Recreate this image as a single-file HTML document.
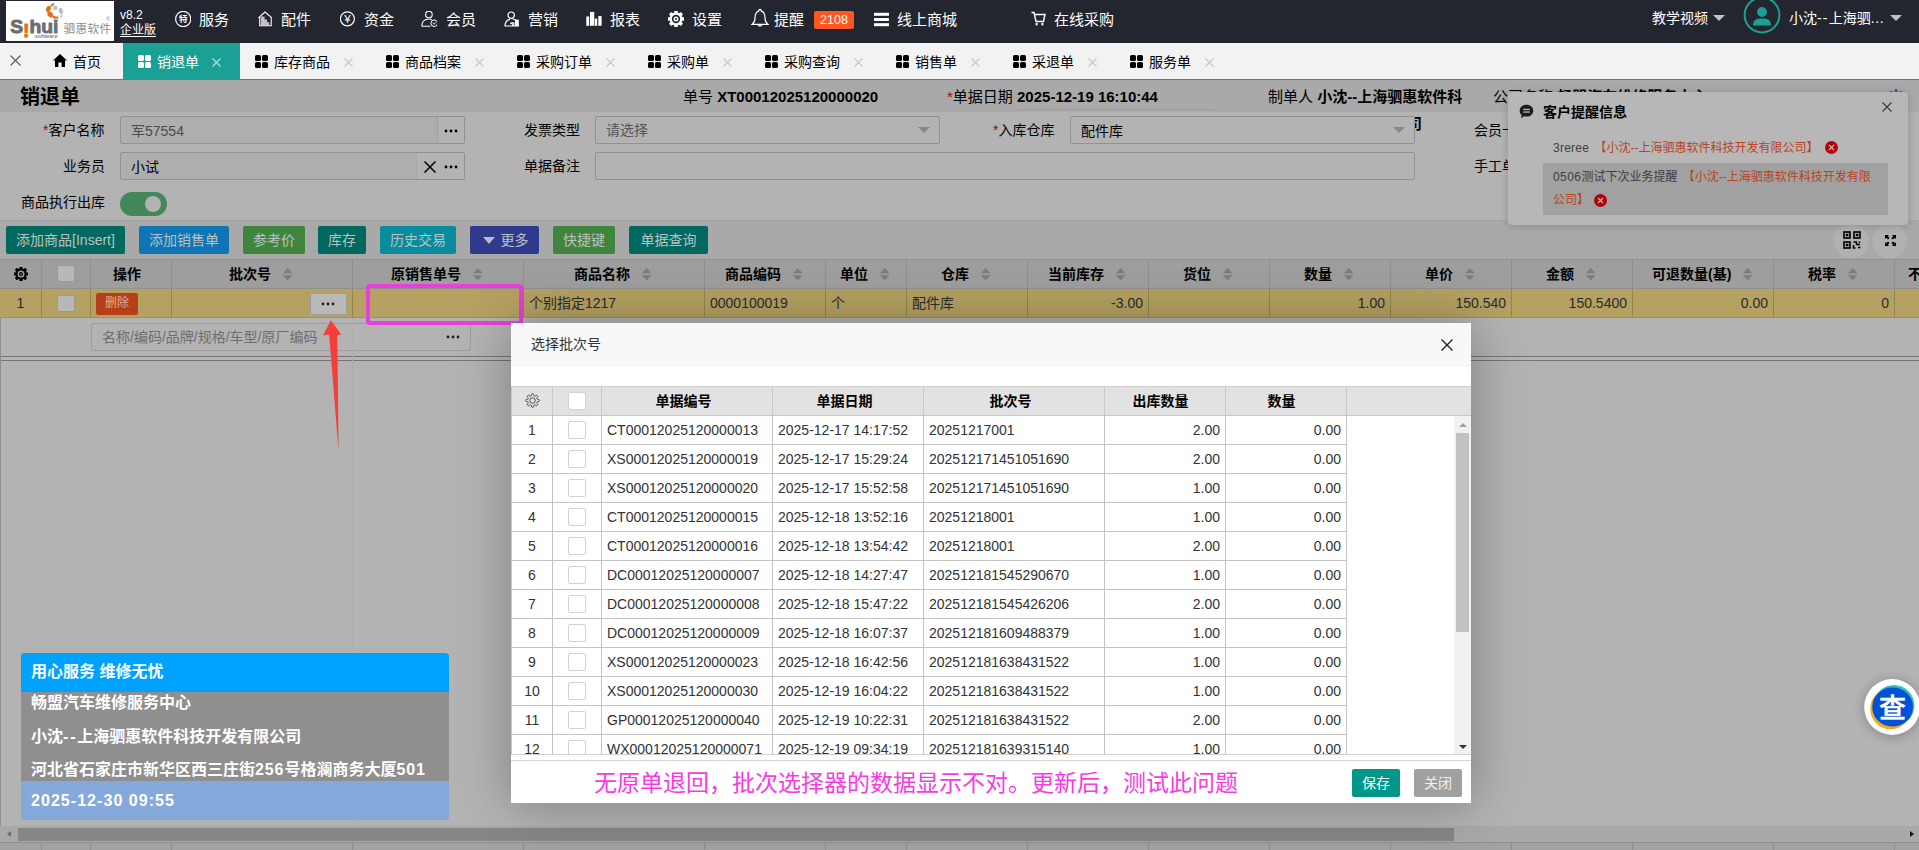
<!DOCTYPE html><html lang="zh-CN"><head><meta charset="utf-8"><title>销退单</title><style>
*{box-sizing:border-box;margin:0;padding:0}
html,body{width:1919px;height:850px;overflow:hidden;background:#b3b3b3}
body{font-family:"Liberation Sans","Noto Sans CJK SC",sans-serif;font-size:14px;color:#000;position:relative}
.abs{position:absolute}
.t{position:absolute;white-space:nowrap;line-height:20px;height:20px}
.b{font-weight:bold}
#top{position:absolute;left:0;top:0;width:1919px;height:43px;background:#23262e}
#top .t{color:#fff;font-size:15px}
#tabs{position:absolute;left:0;top:43px;width:1919px;height:37px;background:#f2f2f2;border-bottom:1px solid #16a092}
#tabs .t{font-size:14px;color:#000}
.ticon{position:absolute;width:13px;height:13px}
.tx{position:absolute;width:10px;height:10px}
.inp{position:absolute;height:28px;border:1px solid #929292;border-radius:2px;background:#b3b3b3}
.btn{position:absolute;top:226px;height:28px;line-height:28px;color:#b9c3c2;font-size:14px;text-align:center;border-radius:2px;white-space:nowrap}
.th{position:absolute;top:260px;height:28px;border-right:1px solid #8f8f8f;}
.td{position:absolute;top:289px;height:28px;border-right:1px solid #94834f;line-height:28px;font-size:14px;color:#2b2b2b;white-space:nowrap}
.sort{position:absolute;top:268px;width:8px;height:13px}
.mth{position:absolute;top:387px;height:29px;border-right:1px solid #c8c8c8;line-height:28px;text-align:center;font-weight:bold;font-size:14px;color:#000}
.mtd{position:absolute;height:29px;border-right:1px solid #c4c4c4;border-bottom:1px solid #c4c4c4;line-height:28px;font-size:14px;color:#333;white-space:nowrap;background:#fff}
.cb{position:absolute;width:17px;height:17px;border:1px solid #d2d2d2;border-radius:2px;background:#fff}
</style></head><body>
<div id="top">
<div class="abs" style="left:6px;top:1px;width:108px;height:40px;background:#fff"></div>
<svg class="abs" style="left:6px;top:1px" width="108" height="40" viewBox="0 0 108 40">
<g fill="#e2701f">
<ellipse cx="46.3" cy="3.8" rx="2.3" ry="1.1" transform="rotate(-38 46.3 3.8)"/>
<ellipse cx="42.4" cy="7.9" rx="2.3" ry="3.3" transform="rotate(28 42.4 7.9)"/>
<ellipse cx="44.2" cy="13.4" rx="2.5" ry="3.3" transform="rotate(-38 44.2 13.4)"/>
<ellipse cx="48.5" cy="16.2" rx="2.1" ry="1.4" transform="rotate(22 48.5 16.2)"/>
<circle cx="51.2" cy="16.5" r="1.2"/>
</g>
<circle cx="49.2" cy="6.9" r="2.3" fill="#c2c2c2"/>
<ellipse cx="54.8" cy="9.9" rx="2" ry="3.1" transform="rotate(-18 54.8 9.9)" fill="#bcbcbc"/>
<ellipse cx="55.2" cy="15.2" rx="1.2" ry="2" transform="rotate(24 55.2 15.2)" fill="#cfcfcf"/>
<circle cx="52.6" cy="18.2" r=".9" fill="#dedede"/>
<text x="4.2" y="31.6" font-family="Liberation Sans,sans-serif" font-weight="bold" font-size="18.8" fill="#6e6e6e" stroke="#6e6e6e" stroke-width=".9" stroke-linejoin="round" textLength="48.2" lengthAdjust="spacingAndGlyphs">S<tspan fill="#e2701f" stroke="#e2701f" dy="4.2">!</tspan><tspan dy="-4.2">hui</tspan></text>
<text x="28.4" y="36.7" font-family="Liberation Sans,sans-serif" font-weight="bold" font-size="5.2" fill="#858585" textLength="23.3" lengthAdjust="spacingAndGlyphs">software</text>
<text x="57.6" y="31.6" font-family="Liberation Sans,Noto Sans CJK SC,sans-serif" font-size="11.6" fill="#8b8b8b" textLength="47.6">驷惠软件</text>
<text x="100" y="20" font-family="Liberation Sans,sans-serif" font-size="5.5" fill="#999">®</text>
</svg>
<div class="t" style="left:120px;top:7px;font-size:12px;line-height:16px">v8.2</div>
<div class="t" style="left:120px;top:22px;font-size:12px;line-height:16px;text-decoration:underline;text-decoration-thickness:1px;text-underline-offset:1.5px">企业版</div>
<svg class="abs" style="left:175px;top:11px" width="16" height="16" viewBox="0 0 16 16"><circle cx="8.2" cy="8" r="7.6" fill="none" stroke="#fff" stroke-width="1.2"/><text x="8.2" y="11" text-anchor="middle" font-size="8.5" fill="#fff" font-family="Liberation Sans,Noto Sans CJK SC,sans-serif" font-weight="bold">特</text></svg>
<div class="t" style="left:199px;top:10px">服务</div>
<svg class="abs" style="left:257px;top:11px" width="16" height="16" viewBox="0 0 16 16"><path d="M1.4 6.9 L8 1 L14.9 6.9 M2.7 6 V14.7 H14.2 V6" fill="none" stroke="#fff" stroke-width="1.1"/><path d="M3.9 14.2 V5.6 H7.6 V8.4 H10.1 V11.3 H12.2 V14.2 Z" fill="#fff" opacity=".72"/></svg>
<div class="t" style="left:281px;top:10px">配件</div>
<svg class="abs" style="left:340px;top:11px" width="16" height="16" viewBox="0 0 16 16"><circle cx="7.4" cy="7.8" r="7" fill="none" stroke="#fff" stroke-width="1.2"/><text x="7.4" y="11.8" text-anchor="middle" font-size="11.5" fill="#fff" font-family="Liberation Sans,Noto Sans CJK SC,sans-serif">¥</text></svg>
<div class="t" style="left:364px;top:10px">资金</div>
<svg class="abs" style="left:421px;top:11px" width="16" height="16" viewBox="0 0 16 16"><circle cx="7.9" cy="3.5" r="3.3" fill="none" stroke="#fff" stroke-width="1.1"/><path d="M0.8 15.2 C0.8 10.5 3.5 8 7.9 8 C9 8 10 8.2 10.8 8.6 M0.8 15.2 H9.4" fill="none" stroke="#fff" stroke-width="1.1"/><circle cx="13.2" cy="12.2" r="3.3" fill="none" stroke="#fff" stroke-width="1"/><path d="M11.8 11.6 L13 13.3 L14.6 11.2" stroke="#fff" stroke-width=".8" fill="none"/></svg>
<div class="t" style="left:446px;top:10px">会员</div>
<svg class="abs" style="left:504px;top:11px" width="16" height="16" viewBox="0 0 16 16"><circle cx="7.2" cy="4.2" r="3.2" fill="none" stroke="#fff" stroke-width="1.2"/><path d="M0.8 15 C1.2 11 3.5 8.8 6 8.3 M0.6 15 H15 M8.6 8 C10 8.2 11 8.6 11.6 9.2" fill="none" stroke="#fff" stroke-width="1.2"/><rect x="8" y="11.2" width="2.4" height="3.8" fill="#fff" opacity=".85"/><rect x="11" y="8.6" width="3.8" height="6.4" fill="#fff"/><circle cx="7.2" cy="12.2" r="1" fill="#fff"/></svg>
<div class="t" style="left:528px;top:10px">营销</div>
<svg class="abs" style="left:586px;top:11px" width="16" height="16" viewBox="0 0 16 16"><rect x="0.3" y="5.5" width="2.9" height="9.3" fill="#fff"/><rect x="4" y="0.9" width="4.2" height="13.9" fill="#fff"/><rect x="8.7" y="7.6" width="2.5" height="7.2" fill="#fff"/><rect x="12.3" y="5.1" width="3.3" height="9.7" fill="#fff"/></svg>
<div class="t" style="left:610px;top:10px">报表</div>
<svg class="abs" style="left:668px;top:11px" width="16" height="16" viewBox="0 0 16 16"><rect x="6.2" y="-0.4" width="3.6" height="5" rx="1" fill="#fff" transform="rotate(0 8 8)"/><rect x="6.2" y="-0.4" width="3.6" height="5" rx="1" fill="#fff" transform="rotate(45 8 8)"/><rect x="6.2" y="-0.4" width="3.6" height="5" rx="1" fill="#fff" transform="rotate(90 8 8)"/><rect x="6.2" y="-0.4" width="3.6" height="5" rx="1" fill="#fff" transform="rotate(135 8 8)"/><rect x="6.2" y="-0.4" width="3.6" height="5" rx="1" fill="#fff" transform="rotate(180 8 8)"/><rect x="6.2" y="-0.4" width="3.6" height="5" rx="1" fill="#fff" transform="rotate(225 8 8)"/><rect x="6.2" y="-0.4" width="3.6" height="5" rx="1" fill="#fff" transform="rotate(270 8 8)"/><rect x="6.2" y="-0.4" width="3.6" height="5" rx="1" fill="#fff" transform="rotate(315 8 8)"/><circle cx="8" cy="8" r="6.5" fill="#fff"/><circle cx="8" cy="8" r="4.2" fill="#23262e"/><circle cx="8" cy="8" r="2.5" fill="#fff"/><circle cx="8" cy="8" r="1" fill="#23262e"/></svg>
<div class="t" style="left:692px;top:10px">设置</div>
<svg class="abs" style="left:751px;top:8px" width="18" height="20" viewBox="0 0 18 18" preserveAspectRatio="none"><path d="M9 1.2 C9.8 1.2 10.2 1.8 10.1 2.5 C13 3.3 14 6 14 9 C14 12 15 13.5 17 14.8 H1 C3 13.5 4 12 4 9 C4 6 5 3.3 7.9 2.5 C7.8 1.8 8.2 1.2 9 1.2 Z M7.3 15.2 C7.6 16.6 10.4 16.6 10.7 15.2" fill="none" stroke="#fff" stroke-width="1.2"/></svg>
<div class="t" style="left:774px;top:10px">提醒</div>
<div class="abs" style="left:814px;top:11px;width:40px;height:18px;background:#ff5722;border-radius:2px;color:#fff;font-size:12.5px;line-height:19px;text-align:center">2108</div>
<svg class="abs" style="left:874px;top:12px" width="15" height="15" viewBox="0 0 15 15"><rect x="0" y="0.8" width="15" height="3" fill="#fff"/><rect x="0" y="6" width="15" height="3" fill="#fff"/><rect x="0" y="11.2" width="15" height="3" fill="#fff"/></svg>
<div class="t" style="left:897px;top:10px">线上商城</div>
<svg class="abs" style="left:1031px;top:11px" width="16" height="16" viewBox="0 0 16 16"><path d="M0.5 1.5 H3 L5 10.5 H12.5 L14 3.5 H3.6" fill="none" stroke="#fff" stroke-width="1.4"/><rect x="4.6" y="12" width="2" height="2.4" fill="#fff"/><rect x="10.4" y="12" width="2" height="2.4" fill="#fff"/></svg>
<div class="t" style="left:1054px;top:10px">在线采购</div>
<div class="t" style="left:1652px;top:8px;font-size:14px">教学视频</div>
<div class="abs" style="left:1713px;top:15px;width:0;height:0;border:6px solid transparent;border-top-color:#c2c2c2;border-bottom:0"></div>
<svg class="abs" style="left:1742.9px;top:-4.2px" width="38" height="38" viewBox="0 0 38 38"><circle cx="19" cy="19" r="17.4" fill="#23262e" stroke="#1aa094" stroke-width="2"/><circle cx="19" cy="16" r="4.9" fill="#1aa094"/><path d="M10 29.5 C10 24.4 13 22.6 19 22.6 C25 22.6 28 24.4 28 29.5 Z" fill="#1aa094"/></svg>
<div class="t" style="left:1789px;top:8px;font-size:14px">小沈<span style="letter-spacing:1.2px">--</span>上海驷<span style="letter-spacing:.6px">...</span></div>
<div class="abs" style="left:1890px;top:15px;width:0;height:0;border:6px solid transparent;border-top-color:#c2c2c2;border-bottom:0"></div>
</div>
<div id="tabs">
<svg class="abs" style="left:10px;top:12px" width="11" height="11" viewBox="0 0 11 11"><path d="M0.5 0.5 L10.5 10.5 M10.5 0.5 L0.5 10.5" stroke="#5a5a5a" stroke-width="1.1" fill="none"/></svg>
<svg class="abs" style="left:53px;top:11px" width="14" height="13" viewBox="0 0 14 13"><path d="M7 0 L14 6.6 H12 V13 H8.6 V8.4 H5.4 V13 H2 V6.6 H0 Z" fill="#000"/></svg>
<div class="t" style="left:73px;top:9px">首页</div>
<div class="abs" style="left:123px;top:0;width:117px;height:37px;background:#1aa094"></div>
<svg class="abs" style="left:138px;top:12px" width="13" height="13" viewBox="0 0 13 13"><rect x="0" y="0" width="6" height="6" rx="1.6" fill="#fff"/><rect x="7" y="0" width="6" height="6" rx="1.6" fill="#fff"/><rect x="0" y="7" width="6" height="6" rx="1.6" fill="#fff"/><rect x="7" y="7" width="6" height="6" rx="1.6" fill="#fff"/></svg>
<div class="t" style="left:157px;top:9px;color:#fff">销退单</div>
<svg class="abs" style="left:212px;top:15px" width="9" height="9" viewBox="0 0 9 9"><path d="M0.5 0.5 L8.5 8.5 M8.5 0.5 L0.5 8.5" stroke="#b7e0db" stroke-width="1.1" fill="none"/></svg>
<svg class="abs" style="left:255px;top:12px" width="13" height="13" viewBox="0 0 13 13"><rect x="0" y="0" width="6" height="6" rx="1.6" fill="#000"/><rect x="7" y="0" width="6" height="6" rx="1.6" fill="#000"/><rect x="0" y="7" width="6" height="6" rx="1.6" fill="#000"/><rect x="7" y="7" width="6" height="6" rx="1.6" fill="#000"/></svg>
<div class="t" style="left:274px;top:9px">库存商品</div>
<svg class="abs" style="left:344px;top:15px" width="9" height="9" viewBox="0 0 9 9"><path d="M0.5 0.5 L8.5 8.5 M8.5 0.5 L0.5 8.5" stroke="#c4c8cc" stroke-width="1.1" fill="none"/></svg>
<svg class="abs" style="left:386px;top:12px" width="13" height="13" viewBox="0 0 13 13"><rect x="0" y="0" width="6" height="6" rx="1.6" fill="#000"/><rect x="7" y="0" width="6" height="6" rx="1.6" fill="#000"/><rect x="0" y="7" width="6" height="6" rx="1.6" fill="#000"/><rect x="7" y="7" width="6" height="6" rx="1.6" fill="#000"/></svg>
<div class="t" style="left:405px;top:9px">商品档案</div>
<svg class="abs" style="left:475px;top:15px" width="9" height="9" viewBox="0 0 9 9"><path d="M0.5 0.5 L8.5 8.5 M8.5 0.5 L0.5 8.5" stroke="#c4c8cc" stroke-width="1.1" fill="none"/></svg>
<svg class="abs" style="left:517px;top:12px" width="13" height="13" viewBox="0 0 13 13"><rect x="0" y="0" width="6" height="6" rx="1.6" fill="#000"/><rect x="7" y="0" width="6" height="6" rx="1.6" fill="#000"/><rect x="0" y="7" width="6" height="6" rx="1.6" fill="#000"/><rect x="7" y="7" width="6" height="6" rx="1.6" fill="#000"/></svg>
<div class="t" style="left:536px;top:9px">采购订单</div>
<svg class="abs" style="left:606px;top:15px" width="9" height="9" viewBox="0 0 9 9"><path d="M0.5 0.5 L8.5 8.5 M8.5 0.5 L0.5 8.5" stroke="#c4c8cc" stroke-width="1.1" fill="none"/></svg>
<svg class="abs" style="left:648px;top:12px" width="13" height="13" viewBox="0 0 13 13"><rect x="0" y="0" width="6" height="6" rx="1.6" fill="#000"/><rect x="7" y="0" width="6" height="6" rx="1.6" fill="#000"/><rect x="0" y="7" width="6" height="6" rx="1.6" fill="#000"/><rect x="7" y="7" width="6" height="6" rx="1.6" fill="#000"/></svg>
<div class="t" style="left:667px;top:9px">采购单</div>
<svg class="abs" style="left:723px;top:15px" width="9" height="9" viewBox="0 0 9 9"><path d="M0.5 0.5 L8.5 8.5 M8.5 0.5 L0.5 8.5" stroke="#c4c8cc" stroke-width="1.1" fill="none"/></svg>
<svg class="abs" style="left:765px;top:12px" width="13" height="13" viewBox="0 0 13 13"><rect x="0" y="0" width="6" height="6" rx="1.6" fill="#000"/><rect x="7" y="0" width="6" height="6" rx="1.6" fill="#000"/><rect x="0" y="7" width="6" height="6" rx="1.6" fill="#000"/><rect x="7" y="7" width="6" height="6" rx="1.6" fill="#000"/></svg>
<div class="t" style="left:784px;top:9px">采购查询</div>
<svg class="abs" style="left:854px;top:15px" width="9" height="9" viewBox="0 0 9 9"><path d="M0.5 0.5 L8.5 8.5 M8.5 0.5 L0.5 8.5" stroke="#c4c8cc" stroke-width="1.1" fill="none"/></svg>
<svg class="abs" style="left:896px;top:12px" width="13" height="13" viewBox="0 0 13 13"><rect x="0" y="0" width="6" height="6" rx="1.6" fill="#000"/><rect x="7" y="0" width="6" height="6" rx="1.6" fill="#000"/><rect x="0" y="7" width="6" height="6" rx="1.6" fill="#000"/><rect x="7" y="7" width="6" height="6" rx="1.6" fill="#000"/></svg>
<div class="t" style="left:915px;top:9px">销售单</div>
<svg class="abs" style="left:971px;top:15px" width="9" height="9" viewBox="0 0 9 9"><path d="M0.5 0.5 L8.5 8.5 M8.5 0.5 L0.5 8.5" stroke="#c4c8cc" stroke-width="1.1" fill="none"/></svg>
<svg class="abs" style="left:1013px;top:12px" width="13" height="13" viewBox="0 0 13 13"><rect x="0" y="0" width="6" height="6" rx="1.6" fill="#000"/><rect x="7" y="0" width="6" height="6" rx="1.6" fill="#000"/><rect x="0" y="7" width="6" height="6" rx="1.6" fill="#000"/><rect x="7" y="7" width="6" height="6" rx="1.6" fill="#000"/></svg>
<div class="t" style="left:1032px;top:9px">采退单</div>
<svg class="abs" style="left:1088px;top:15px" width="9" height="9" viewBox="0 0 9 9"><path d="M0.5 0.5 L8.5 8.5 M8.5 0.5 L0.5 8.5" stroke="#c4c8cc" stroke-width="1.1" fill="none"/></svg>
<svg class="abs" style="left:1130px;top:12px" width="13" height="13" viewBox="0 0 13 13"><rect x="0" y="0" width="6" height="6" rx="1.6" fill="#000"/><rect x="7" y="0" width="6" height="6" rx="1.6" fill="#000"/><rect x="0" y="7" width="6" height="6" rx="1.6" fill="#000"/><rect x="7" y="7" width="6" height="6" rx="1.6" fill="#000"/></svg>
<div class="t" style="left:1149px;top:9px">服务单</div>
<svg class="abs" style="left:1205px;top:15px" width="9" height="9" viewBox="0 0 9 9"><path d="M0.5 0.5 L8.5 8.5 M8.5 0.5 L0.5 8.5" stroke="#c4c8cc" stroke-width="1.1" fill="none"/></svg>
</div>
<div class="abs" style="left:0;top:80px;width:1919px;height:32px;background:#a9a9a9"></div>
<div class="abs" style="left:0;top:220px;width:1919px;height:39px;background:#a9a9a9;border-top:1px solid #a3a3a3"></div>
<div class="t b" style="left:20px;top:84px;font-size:20px;line-height:26px;height:26px">销退单</div>
<div class="t" style="left:683px;top:87px;font-size:15px">单号 <span class="b" style="font-size:15px">XT00012025120000020</span></div>
<div class="t" style="left:947px;top:87px;font-size:15px"><span style="color:#b10000">*</span>单据日期 <span class="b" style="font-size:15px">2025-12-19 16:10:44</span></div>
<div class="abs" style="left:1017px;top:109px;width:198px;height:1px;background:#9b9b9b"></div>
<div class="t" style="left:1268px;top:87px;font-size:15px">制单人 <span class="b">小沈--上海驷惠软件科</span></div>
<div class="t b" style="left:1407px;top:114px;font-size:15px">司</div>
<div class="t" style="left:1493px;top:87px;font-size:15px">公司名称 <span class="b">畅盟汽车维修服务中心</span></div>
<div class="t" style="left:43px;top:120px"><span style="color:#b10000">*</span>客户名称</div>
<div class="inp" style="left:120px;top:116px;width:345px;background:#aeaeae"><div class="abs" style="left:316px;top:0;width:27px;height:26px;background:#b3b3b3;border-left:1px solid #a0a0a0"></div></div>
<div class="t" style="left:131px;top:121px;color:#4c4c4c">军57554</div>
<svg class="abs" style="left:444px;top:129px" width="14" height="4" viewBox="0 0 14 4"><circle cx="2" cy="2" r="1.4" fill="#000"/><circle cx="7" cy="2" r="1.4" fill="#000"/><circle cx="12" cy="2" r="1.4" fill="#000"/></svg>
<div class="t" style="left:524px;top:120px">发票类型</div>
<div class="inp" style="left:595px;top:116px;width:345px"></div>
<div class="t" style="left:606px;top:120px;color:#555">请选择</div>
<div class="abs" style="left:918px;top:127px;width:0;height:0;border:6px solid transparent;border-top-color:#888;border-bottom:0"></div>
<div class="t" style="left:993px;top:120px"><span style="color:#b10000">*</span>入库仓库</div>
<div class="inp" style="left:1070px;top:116px;width:345px"></div>
<div class="t" style="left:1081px;top:121px;">配件库</div>
<div class="abs" style="left:1393px;top:127px;width:0;height:0;border:6px solid transparent;border-top-color:#888;border-bottom:0"></div>
<div class="t" style="left:1474px;top:120px">会员卡号</div>
<div class="t" style="left:63px;top:156px">业务员</div>
<div class="inp" style="left:120px;top:152px;width:345px;background:#aeaeae"><div class="abs" style="left:295px;top:0;width:48px;height:26px;background:#b3b3b3;border-left:1px solid #a8a8a8"></div></div>
<div class="t" style="left:131px;top:157px;">小试</div>
<svg class="abs" style="left:424px;top:161px" width="12" height="12" viewBox="0 0 12 12"><path d="M0.5 0.5 L11.5 11.5 M11.5 0.5 L0.5 11.5" stroke="#000" stroke-width="1.5" fill="none"/></svg>
<svg class="abs" style="left:444px;top:165px" width="14" height="4" viewBox="0 0 14 4"><circle cx="2" cy="2" r="1.4" fill="#000"/><circle cx="7" cy="2" r="1.4" fill="#000"/><circle cx="12" cy="2" r="1.4" fill="#000"/></svg>
<div class="t" style="left:524px;top:156px">单据备注</div>
<div class="inp" style="left:595px;top:152px;width:820px"></div>
<div class="t" style="left:1474px;top:156px">手工单号</div>
<div class="t" style="left:21px;top:192px">商品执行出库</div>
<div class="abs" style="left:120px;top:192px;width:47px;height:24px;border-radius:12px;background:#43865a"></div>
<div class="abs" style="left:145px;top:196px;width:16px;height:16px;border-radius:8px;background:#b3b3b3"></div>
<div class="btn" style="left:6px;width:119px;background:#00695f">添加商品[Insert]</div>
<div class="btn" style="left:139px;width:90px;background:#0f75b4">添加销售单</div>
<div class="btn" style="left:243px;width:62px;background:#3f853e">参考价</div>
<div class="btn" style="left:318px;width:48px;background:#00695f">库存</div>
<div class="btn" style="left:380px;width:76px;background:#088c9e">历史交易</div>
<div class="btn" style="left:470px;width:69px;background:#2f3a8c;padding-left:20px">更多<span class="abs" style="left:13px;top:11px;width:0;height:0;border:6px solid transparent;border-top:7px solid #b9bbd0;border-bottom:0"></span></div>
<div class="btn" style="left:553px;width:62px;background:#3f853e">快捷键</div>
<div class="btn" style="left:629px;width:79px;background:#00695f">单据查询</div>
<div class="abs" style="left:1834px;top:224px;width:35px;height:34px;border-radius:17px;background:#b1b1b1"></div>
<div class="abs" style="left:1872px;top:224px;width:35px;height:34px;border-radius:17px;background:#b1b1b1"></div>
<svg class="abs" style="left:1843px;top:231px" width="18" height="18" viewBox="0 0 18 18" fill="none" stroke="#000" stroke-width="1.6"><rect x="1" y="1" width="6" height="6"/><rect x="11" y="1" width="6" height="6"/><rect x="1" y="11" width="6" height="6"/><path d="M2.8 4 h2.6 M12.8 4 h2.6 M2.8 14 h2.6" stroke-width="2.6"/><path d="M10.5 11 h3 v2.5 h3.5 M10.5 14 v3 h2 M15 16.5 h2.5 M16.5 10.5 v1.5" stroke-width="1.5"/></svg>
<svg class="abs" style="left:1885px;top:235px" width="11" height="11" viewBox="0 0 11 11" fill="#000"><path d="M0 0 H4 L2.8 1.2 L4.6 3 L3 4.6 L1.2 2.8 L0 4 Z"/><path d="M11 0 V4 L9.8 2.8 L8 4.6 L6.4 3 L8.2 1.2 L7 0 Z"/><path d="M0 11 V7 L1.2 8.2 L3 6.4 L4.6 8 L2.8 9.8 L4 11 Z"/><path d="M11 11 H7 L8.2 9.8 L6.4 8 L8 6.4 L9.8 8.2 L11 7 Z"/></svg>
<div class="abs" style="left:0;top:259px;width:1919px;height:30px;background:#9e9e9e;border-top:1px solid #8f8f8f;border-bottom:1px solid #8f8f8f"></div>
<div class="th" style="left:1px;width:41px"></div>
<div class="th" style="left:42px;width:49px"></div>
<div class="th" style="left:91px;width:81px"></div>
<div class="th" style="left:172px;width:181px"></div>
<div class="th" style="left:353px;width:171px"></div>
<div class="th" style="left:524px;width:181px"></div>
<div class="th" style="left:705px;width:121px"></div>
<div class="th" style="left:826px;width:81px"></div>
<div class="th" style="left:907px;width:121px"></div>
<div class="th" style="left:1028px;width:121px"></div>
<div class="th" style="left:1149px;width:121px"></div>
<div class="th" style="left:1270px;width:121px"></div>
<div class="th" style="left:1391px;width:121px"></div>
<div class="th" style="left:1512px;width:121px"></div>
<div class="th" style="left:1633px;width:141px"></div>
<div class="th" style="left:1774px;width:121px"></div>
<div class="th" style="left:1895px;width:66px"></div>
<div class="t b" style="left:113px;top:264px">操作</div>
<div class="t b" style="left:229px;top:264px">批次号</div>
<svg class="abs" style="left:282.8px;top:268px" width="9.4" height="12.4" viewBox="0 0 9 13" preserveAspectRatio="none"><path d="M4.5 0 L9 5.4 H0 Z" fill="#7d7d7d"/><path d="M4.5 13 L9 7.6 H0 Z" fill="#7d7d7d"/></svg>
<div class="t b" style="left:391px;top:264px">原销售单号</div>
<svg class="abs" style="left:472.8px;top:268px" width="9.4" height="12.4" viewBox="0 0 9 13" preserveAspectRatio="none"><path d="M4.5 0 L9 5.4 H0 Z" fill="#7d7d7d"/><path d="M4.5 13 L9 7.6 H0 Z" fill="#7d7d7d"/></svg>
<div class="t b" style="left:574px;top:264px">商品名称</div>
<svg class="abs" style="left:641.8px;top:268px" width="9.4" height="12.4" viewBox="0 0 9 13" preserveAspectRatio="none"><path d="M4.5 0 L9 5.4 H0 Z" fill="#7d7d7d"/><path d="M4.5 13 L9 7.6 H0 Z" fill="#7d7d7d"/></svg>
<div class="t b" style="left:725px;top:264px">商品编码</div>
<svg class="abs" style="left:792.8px;top:268px" width="9.4" height="12.4" viewBox="0 0 9 13" preserveAspectRatio="none"><path d="M4.5 0 L9 5.4 H0 Z" fill="#7d7d7d"/><path d="M4.5 13 L9 7.6 H0 Z" fill="#7d7d7d"/></svg>
<div class="t b" style="left:840px;top:264px">单位</div>
<svg class="abs" style="left:879.8px;top:268px" width="9.4" height="12.4" viewBox="0 0 9 13" preserveAspectRatio="none"><path d="M4.5 0 L9 5.4 H0 Z" fill="#7d7d7d"/><path d="M4.5 13 L9 7.6 H0 Z" fill="#7d7d7d"/></svg>
<div class="t b" style="left:941px;top:264px">仓库</div>
<svg class="abs" style="left:980.8px;top:268px" width="9.4" height="12.4" viewBox="0 0 9 13" preserveAspectRatio="none"><path d="M4.5 0 L9 5.4 H0 Z" fill="#7d7d7d"/><path d="M4.5 13 L9 7.6 H0 Z" fill="#7d7d7d"/></svg>
<div class="t b" style="left:1048px;top:264px">当前库存</div>
<svg class="abs" style="left:1115.8px;top:268px" width="9.4" height="12.4" viewBox="0 0 9 13" preserveAspectRatio="none"><path d="M4.5 0 L9 5.4 H0 Z" fill="#7d7d7d"/><path d="M4.5 13 L9 7.6 H0 Z" fill="#7d7d7d"/></svg>
<div class="t b" style="left:1183px;top:264px">货位</div>
<svg class="abs" style="left:1222.8px;top:268px" width="9.4" height="12.4" viewBox="0 0 9 13" preserveAspectRatio="none"><path d="M4.5 0 L9 5.4 H0 Z" fill="#7d7d7d"/><path d="M4.5 13 L9 7.6 H0 Z" fill="#7d7d7d"/></svg>
<div class="t b" style="left:1304px;top:264px">数量</div>
<svg class="abs" style="left:1343.8px;top:268px" width="9.4" height="12.4" viewBox="0 0 9 13" preserveAspectRatio="none"><path d="M4.5 0 L9 5.4 H0 Z" fill="#7d7d7d"/><path d="M4.5 13 L9 7.6 H0 Z" fill="#7d7d7d"/></svg>
<div class="t b" style="left:1425px;top:264px">单价</div>
<svg class="abs" style="left:1464.8px;top:268px" width="9.4" height="12.4" viewBox="0 0 9 13" preserveAspectRatio="none"><path d="M4.5 0 L9 5.4 H0 Z" fill="#7d7d7d"/><path d="M4.5 13 L9 7.6 H0 Z" fill="#7d7d7d"/></svg>
<div class="t b" style="left:1546px;top:264px">金额</div>
<svg class="abs" style="left:1585.8px;top:268px" width="9.4" height="12.4" viewBox="0 0 9 13" preserveAspectRatio="none"><path d="M4.5 0 L9 5.4 H0 Z" fill="#7d7d7d"/><path d="M4.5 13 L9 7.6 H0 Z" fill="#7d7d7d"/></svg>
<div class="t b" style="left:1652px;top:264px">可退数量(基)</div>
<svg class="abs" style="left:1742.8px;top:268px" width="9.4" height="12.4" viewBox="0 0 9 13" preserveAspectRatio="none"><path d="M4.5 0 L9 5.4 H0 Z" fill="#7d7d7d"/><path d="M4.5 13 L9 7.6 H0 Z" fill="#7d7d7d"/></svg>
<div class="t b" style="left:1808px;top:264px">税率</div>
<svg class="abs" style="left:1847.8px;top:268px" width="9.4" height="12.4" viewBox="0 0 9 13" preserveAspectRatio="none"><path d="M4.5 0 L9 5.4 H0 Z" fill="#7d7d7d"/><path d="M4.5 13 L9 7.6 H0 Z" fill="#7d7d7d"/></svg>
<div class="t b" style="left:1908px;top:264px">不含税</div>
<svg class="abs" style="left:14px;top:267px" width="14" height="14" viewBox="0 0 16 16"><rect x="6.2" y="-0.4" width="3.6" height="5" rx="1" fill="#000" transform="rotate(0 8 8)"/><rect x="6.2" y="-0.4" width="3.6" height="5" rx="1" fill="#000" transform="rotate(45 8 8)"/><rect x="6.2" y="-0.4" width="3.6" height="5" rx="1" fill="#000" transform="rotate(90 8 8)"/><rect x="6.2" y="-0.4" width="3.6" height="5" rx="1" fill="#000" transform="rotate(135 8 8)"/><rect x="6.2" y="-0.4" width="3.6" height="5" rx="1" fill="#000" transform="rotate(180 8 8)"/><rect x="6.2" y="-0.4" width="3.6" height="5" rx="1" fill="#000" transform="rotate(225 8 8)"/><rect x="6.2" y="-0.4" width="3.6" height="5" rx="1" fill="#000" transform="rotate(270 8 8)"/><rect x="6.2" y="-0.4" width="3.6" height="5" rx="1" fill="#000" transform="rotate(315 8 8)"/><circle cx="8" cy="8" r="6.5" fill="#000"/><circle cx="8" cy="8" r="4" fill="#9e9e9e"/><circle cx="8" cy="8" r="2.3" fill="#000"/><circle cx="8" cy="8" r=".9" fill="#9e9e9e"/></svg>
<div class="cb" style="left:57px;top:265px;width:18px;background:#b8b8b8;border-color:#9a9a9a"></div>
<div class="abs" style="left:0;top:289px;width:1919px;height:29px;background:#b5a162;border-bottom:1px solid #8f8f8f"></div>
<div class="td" style="left:1px;width:41px"></div>
<div class="td" style="left:42px;width:49px"></div>
<div class="td" style="left:91px;width:81px"></div>
<div class="td" style="left:172px;width:181px"></div>
<div class="td" style="left:353px;width:171px"></div>
<div class="td" style="left:524px;width:181px"></div>
<div class="td" style="left:705px;width:121px"></div>
<div class="td" style="left:826px;width:81px"></div>
<div class="td" style="left:907px;width:121px"></div>
<div class="td" style="left:1028px;width:121px"></div>
<div class="td" style="left:1149px;width:121px"></div>
<div class="td" style="left:1270px;width:121px"></div>
<div class="td" style="left:1391px;width:121px"></div>
<div class="td" style="left:1512px;width:121px"></div>
<div class="td" style="left:1633px;width:141px"></div>
<div class="td" style="left:1774px;width:121px"></div>
<div class="td" style="left:1895px;width:66px"></div>
<div class="td" style="left:0;width:41px;text-align:center;border:0">1</div>
<div class="cb" style="left:57px;top:295px;width:18px;background:#b8b8b8;border-color:#9a9a9a"></div>
<div class="abs" style="left:96px;top:293px;width:42px;height:22px;background:#b63e18;border-radius:2px;color:#dcb0a2;font-size:12px;line-height:21px;text-align:center">删除</div>
<div class="abs" style="left:310px;top:293px;width:37px;height:22px;background:#b9b9b9;border:1px solid #9c9c9c;border-radius:2px"></div>
<svg class="abs" style="left:321px;top:302px" width="14" height="4" viewBox="0 0 14 4"><circle cx="2" cy="2" r="1.4" fill="#222"/><circle cx="7" cy="2" r="1.4" fill="#222"/><circle cx="12" cy="2" r="1.4" fill="#222"/></svg>
<div class="td" style="left:523px;width:181px;padding-left:6px;border:0">个别指定1217</div>
<div class="td" style="left:704px;width:121px;padding-left:6px;border:0">0000100019</div>
<div class="td" style="left:825px;width:81px;padding-left:6px;border:0">个</div>
<div class="td" style="left:906px;width:121px;padding-left:6px;border:0">配件库</div>
<div class="td" style="left:1027px;width:121px;text-align:right;padding-right:5px;border:0">-3.00</div>
<div class="td" style="left:1269px;width:121px;text-align:right;padding-right:5px;border:0">1.00</div>
<div class="td" style="left:1390px;width:121px;text-align:right;padding-right:5px;border:0">150.540</div>
<div class="td" style="left:1511px;width:121px;text-align:right;padding-right:5px;border:0">150.5400</div>
<div class="td" style="left:1632px;width:141px;text-align:right;padding-right:5px;border:0">0.00</div>
<div class="td" style="left:1773px;width:121px;text-align:right;padding-right:5px;border:0">0</div>
<div class="inp" style="left:91px;top:323px;width:380px;height:28px;border-color:#9d9d9d"></div>
<div class="t" style="left:102px;top:327px;font-size:14px;color:#6e6e6e">名称/编码/品牌/规格/车型/原厂编码</div>
<svg class="abs" style="left:446px;top:335px" width="14" height="4" viewBox="0 0 14 4"><circle cx="2" cy="2" r="1.4" fill="#222"/><circle cx="7" cy="2" r="1.4" fill="#222"/><circle cx="12" cy="2" r="1.4" fill="#222"/></svg>
<div class="abs" style="left:1px;top:356px;width:1918px;height:5px;border-top:1px solid #747474;border-bottom:1px solid #747474;background:#b5b5b5"></div>
<div class="abs" style="left:0;top:318px;width:1px;height:532px;background:#8f8f8f"></div>
<div class="abs" style="left:352px;top:318px;width:1px;height:508px;background:#aeaeae"></div>
<div class="abs" style="left:0;top:826px;width:1919px;height:16px;background:#a9a9a9"></div>
<div class="abs" style="left:18px;top:828px;width:1436px;height:13px;background:#878787"></div>
<div class="abs" style="left:7px;top:830.5px;width:0;height:0;border:3.5px solid transparent;border-right:4px solid #6c6c6c;border-left:0"></div>
<div class="abs" style="left:1910px;top:830.5px;width:0;height:0;border:3.5px solid transparent;border-left:4.5px solid #111;border-right:0"></div>
<div class="abs" style="left:0;top:842px;width:1919px;height:8px;background:#a2a2a2;border-top:1px solid #8e8e8e"></div>
<div class="abs" style="left:41px;top:843px;width:1px;height:7px;background:#8e8e8e"></div>
<div class="abs" style="left:90px;top:843px;width:1px;height:7px;background:#8e8e8e"></div>
<div class="abs" style="left:171px;top:843px;width:1px;height:7px;background:#8e8e8e"></div>
<div class="abs" style="left:352px;top:843px;width:1px;height:7px;background:#8e8e8e"></div>
<div class="abs" style="left:523px;top:843px;width:1px;height:7px;background:#8e8e8e"></div>
<div class="abs" style="left:704px;top:843px;width:1px;height:7px;background:#8e8e8e"></div>
<div class="abs" style="left:825px;top:843px;width:1px;height:7px;background:#8e8e8e"></div>
<div class="abs" style="left:906px;top:843px;width:1px;height:7px;background:#8e8e8e"></div>
<div class="abs" style="left:1027px;top:843px;width:1px;height:7px;background:#8e8e8e"></div>
<div class="abs" style="left:1148px;top:843px;width:1px;height:7px;background:#8e8e8e"></div>
<div class="abs" style="left:1269px;top:843px;width:1px;height:7px;background:#8e8e8e"></div>
<div class="abs" style="left:1390px;top:843px;width:1px;height:7px;background:#8e8e8e"></div>
<div class="abs" style="left:1511px;top:843px;width:1px;height:7px;background:#8e8e8e"></div>
<div class="abs" style="left:1632px;top:843px;width:1px;height:7px;background:#8e8e8e"></div>
<div class="abs" style="left:1773px;top:843px;width:1px;height:7px;background:#8e8e8e"></div>
<div class="abs" style="left:1894px;top:843px;width:1px;height:7px;background:#8e8e8e"></div>
<svg class="abs" style="left:1888px;top:88px" width="16" height="5" viewBox="0 0 16 5"><path d="M6.4 4.2 L7 1.2 Q8 0.4 9 1.2 L9.8 4.2 Z M1.4 4.2 Q1.6 3 3 3 L5 3.4 V4.2 Z M14.8 4.2 Q14.6 3 13.2 3 L11.2 3.4 V4.2 Z" fill="#1767c0"/></svg>
<div class="abs" style="left:1508px;top:92px;width:400px;height:133px;background:#b7b7b7;border-radius:4px;box-shadow:0 1px 8px rgba(0,0,0,.18)"></div>
<svg class="abs" style="left:1519px;top:104px" width="15" height="15" viewBox="0 0 15 15"><path d="M7.5 0.8 C11.4 0.8 14.3 3.4 14.3 6.7 C14.3 10 11.4 12.6 7.5 12.6 C6.6 12.6 5.8 12.5 5 12.2 L2 14.2 L2.6 11 C1.4 10 0.7 8.4 0.7 6.7 C0.7 3.4 3.6 0.8 7.5 0.8 Z" fill="#1c1c1c"/><rect x="4.2" y="4.8" width="6.6" height="1.3" fill="#b7b7b7"/><rect x="4.2" y="7.4" width="6.6" height="1.3" fill="#b7b7b7"/></svg>
<div class="t b" style="left:1543px;top:102px;font-size:14px">客户提醒信息</div>
<svg class="abs" style="left:1882px;top:102px" width="10" height="10" viewBox="0 0 10 10"><path d="M0.5 0.5 L9.5 9.5 M9.5 0.5 L0.5 9.5" stroke="#3c3c3c" stroke-width="1.2" fill="none"/></svg>
<div class="t" style="left:1553px;top:138px;font-size:12px;color:#3e3e3e"><span style="letter-spacing:.25px">3reree</span> <span style="color:#b8431f;margin-left:2px">【小沈--上海驷惠软件科技开发有限公司】</span></div>
<svg class="abs" style="left:1825px;top:141.0px" width="13" height="13" viewBox="0 0 13 13"><circle cx="6.5" cy="6.5" r="6.5" fill="#b3000d"/><path d="M4 4 L9 9 M9 4 L4 9" stroke="#d9b0b0" stroke-width="1.2"/></svg>
<div class="abs" style="left:1543px;top:163px;width:345px;height:52px;background:#a1a1a1"></div>
<div class="t" style="left:1553px;top:167px;font-size:12px;color:#3e3e3e"><span style="letter-spacing:.45px">0506</span>测试下次业务提醒 <span style="color:#b8431f;margin-left:2px">【小沈--上海驷惠软件科技开发有限</span></div>
<div class="t" style="left:1553px;top:190px;font-size:12px;color:#b8431f">公司】</div>
<svg class="abs" style="left:1594px;top:193.5px" width="13" height="13" viewBox="0 0 13 13"><circle cx="6.5" cy="6.5" r="6.5" fill="#b3000d"/><path d="M4 4 L9 9 M9 4 L4 9" stroke="#d9b0b0" stroke-width="1.2"/></svg>
<div class="abs" style="left:366px;top:284px;width:157px;height:41px;border:4px solid #e83fd9;border-radius:4px"></div>
<svg class="abs" style="left:318px;top:316px" width="34" height="140" viewBox="0 0 34 140"><path d="M12.8 4.2 L23.4 18.6 L19.3 19 L20.6 135.4 L11.2 18.6 L5 19.4 Z" fill="#f73c3c"/></svg>
<div class="abs" style="left:21px;top:653px;width:428px;height:167px;border-radius:4px;overflow:hidden;background:#8f8f8f"><div class="abs" style="left:0;top:0;width:428px;height:39px;background:#00a2ff"></div><div class="abs" style="left:0;top:128px;width:428px;height:39px;background:#86a9db"></div><div class="t b" style="left:10px;top:7px;font-size:16px;line-height:24px;height:24px;color:#fff">用心服务 维修无忧</div><div class="t b" style="left:10px;top:38px;font-size:16px;line-height:24px;height:24px;color:#fff">畅盟汽车维修服务中心</div><div class="t b" style="left:10px;top:72px;font-size:16px;line-height:24px;height:24px;color:#fff">小沈<span style="letter-spacing:1.8px">--</span>上海驷惠软件科技开发有限公司</div><div class="t b" style="left:10px;top:105px;font-size:16px;line-height:24px;height:24px;color:#fff">河北省石家庄市新华区西三庄街<span style="letter-spacing:.9px">256</span>号格澜商务大厦<span style="letter-spacing:.9px">501</span></div><div class="t b" style="left:10px;top:136px;font-size:16px;line-height:24px;height:24px;color:#fff;letter-spacing:1.05px">2025-12-30 09:55</div></div>
<svg class="abs" style="left:1839px;top:656px" width="80" height="100" viewBox="0 0 80 100"><defs><filter id="sh" x="-50%" y="-50%" width="200%" height="200%"><feGaussianBlur stdDeviation="5.5"/></filter></defs>
<circle cx="53.2" cy="52.5" r="29" fill="#000" opacity=".22" filter="url(#sh)"/>
<circle cx="53.2" cy="51" r="28" fill="#fff"/>
<circle cx="55" cy="49.4" r="20.4" fill="#2ec5b6"/>
<circle cx="51.6" cy="52.8" r="20.4" fill="#f7a81b"/>
<rect x="33.3" y="31.6" width="40.6" height="38.8" rx="19.6" ry="19" fill="#0052d9"/>
<text x="53.4" y="61.6" text-anchor="middle" font-family="Liberation Sans,Noto Sans CJK SC,sans-serif" font-weight="500" font-size="27" fill="#fff" stroke="#fff" stroke-width=".5">查</text></svg>
<div class="abs" style="left:511px;top:323px;width:960px;height:480px;background:#fff;box-shadow:1px 1px 50px rgba(0,0,0,.3)"></div>
<div class="abs" style="left:511px;top:323px;width:960px;height:43px;background:#f8f8f8;border-bottom:1px solid #eee"></div>
<div class="t" style="left:531px;top:334px;font-size:14px;color:#333">选择批次号</div>
<svg class="abs" style="left:1441px;top:339px" width="12" height="12" viewBox="0 0 12 12"><path d="M0.5 0.5 L11.5 11.5 M11.5 0.5 L0.5 11.5" stroke="#222" stroke-width="1.4" fill="none"/></svg>
<div class="abs" style="left:511px;top:386px;width:960px;height:30px;background:#e2e2e2;border-top:1px solid #cfcfcf;border-bottom:1px solid #c8c8c8"></div>
<div class="mth" style="left:513px;width:40px;padding-right:7px"></div>
<div class="mth" style="left:553px;width:49px;padding-right:7px"></div>
<div class="mth" style="left:602px;width:171px;padding-right:7px">单据编号</div>
<div class="mth" style="left:773px;width:151px;padding-right:7px">单据日期</div>
<div class="mth" style="left:924px;width:181px;padding-right:7px">批次号</div>
<div class="mth" style="left:1105px;width:121px;padding-right:9px">出库数量</div>
<div class="mth" style="left:1226px;width:121px;padding-right:9px">数量</div>
<div class="abs" style="left:511px;top:387px;width:1px;height:368px;background:#c8c8c8"></div>
<svg class="abs" style="left:524.5px;top:393px" width="15" height="15" viewBox="0 0 16 16" fill="none" stroke="#3a3a3a" stroke-width=".9"><path d="M8.00 0.70 L8.48 0.72 L8.93 0.94 L9.21 1.92 L9.37 2.90 L9.64 3.17 L9.95 3.29 L10.26 3.43 L10.64 3.42 L11.44 2.84 L12.33 2.35 L12.81 2.51 L13.16 2.84 L13.49 3.19 L13.65 3.67 L13.16 4.56 L12.58 5.36 L12.57 5.74 L12.71 6.05 L12.83 6.36 L13.10 6.63 L14.08 6.79 L15.06 7.07 L15.28 7.52 L15.30 8.00 L15.28 8.48 L15.06 8.93 L14.08 9.21 L13.10 9.37 L12.83 9.64 L12.71 9.95 L12.57 10.26 L12.58 10.64 L13.16 11.44 L13.65 12.33 L13.49 12.81 L13.16 13.16 L12.81 13.49 L12.33 13.65 L11.44 13.16 L10.64 12.58 L10.26 12.57 L9.95 12.71 L9.64 12.83 L9.37 13.10 L9.21 14.08 L8.93 15.06 L8.48 15.28 L8.00 15.30 L7.52 15.28 L7.07 15.06 L6.79 14.08 L6.63 13.10 L6.36 12.83 L6.05 12.71 L5.74 12.57 L5.36 12.58 L4.56 13.16 L3.67 13.65 L3.19 13.49 L2.84 13.16 L2.51 12.81 L2.35 12.33 L2.84 11.44 L3.42 10.64 L3.43 10.26 L3.29 9.95 L3.17 9.64 L2.90 9.37 L1.92 9.21 L0.94 8.93 L0.72 8.48 L0.70 8.00 L0.72 7.52 L0.94 7.07 L1.92 6.79 L2.90 6.63 L3.17 6.36 L3.29 6.05 L3.43 5.74 L3.42 5.36 L2.84 4.56 L2.35 3.67 L2.51 3.19 L2.84 2.84 L3.19 2.51 L3.67 2.35 L4.56 2.84 L5.36 3.42 L5.74 3.43 L6.05 3.29 L6.36 3.17 L6.63 2.90 L6.79 1.92 L7.07 0.94 L7.52 0.72 Z"/><circle cx="8" cy="8" r="3"/></svg>
<div class="cb" style="left:568px;top:392px;width:18px;height:18px"></div>
<div class="abs" style="left:512px;top:416px;width:958px;height:339px;overflow:hidden">
<div class="mtd" style="left:0px;top:0px;width:41px;text-align:center;">1</div>
<div class="mtd" style="left:41px;top:0px;width:49px;padding-left:5px;"></div>
<div class="mtd" style="left:90px;top:0px;width:171px;padding-left:5px;">CT00012025120000013</div>
<div class="mtd" style="left:261px;top:0px;width:151px;padding-left:5px;">2025-12-17 14:17:52</div>
<div class="mtd" style="left:412px;top:0px;width:181px;padding-left:5px;">20251217001</div>
<div class="mtd" style="left:593px;top:0px;width:121px;text-align:right;padding-right:5px;">2.00</div>
<div class="mtd" style="left:714px;top:0px;width:121px;text-align:right;padding-right:5px;">0.00</div>
<div class="cb" style="left:56px;top:5px;width:18px;height:18px"></div>
<div class="mtd" style="left:0px;top:29px;width:41px;text-align:center;">2</div>
<div class="mtd" style="left:41px;top:29px;width:49px;padding-left:5px;"></div>
<div class="mtd" style="left:90px;top:29px;width:171px;padding-left:5px;">XS00012025120000019</div>
<div class="mtd" style="left:261px;top:29px;width:151px;padding-left:5px;">2025-12-17 15:29:24</div>
<div class="mtd" style="left:412px;top:29px;width:181px;padding-left:5px;">202512171451051690</div>
<div class="mtd" style="left:593px;top:29px;width:121px;text-align:right;padding-right:5px;">2.00</div>
<div class="mtd" style="left:714px;top:29px;width:121px;text-align:right;padding-right:5px;">0.00</div>
<div class="cb" style="left:56px;top:34px;width:18px;height:18px"></div>
<div class="mtd" style="left:0px;top:58px;width:41px;text-align:center;">3</div>
<div class="mtd" style="left:41px;top:58px;width:49px;padding-left:5px;"></div>
<div class="mtd" style="left:90px;top:58px;width:171px;padding-left:5px;">XS00012025120000020</div>
<div class="mtd" style="left:261px;top:58px;width:151px;padding-left:5px;">2025-12-17 15:52:58</div>
<div class="mtd" style="left:412px;top:58px;width:181px;padding-left:5px;">202512171451051690</div>
<div class="mtd" style="left:593px;top:58px;width:121px;text-align:right;padding-right:5px;">1.00</div>
<div class="mtd" style="left:714px;top:58px;width:121px;text-align:right;padding-right:5px;">0.00</div>
<div class="cb" style="left:56px;top:63px;width:18px;height:18px"></div>
<div class="mtd" style="left:0px;top:87px;width:41px;text-align:center;">4</div>
<div class="mtd" style="left:41px;top:87px;width:49px;padding-left:5px;"></div>
<div class="mtd" style="left:90px;top:87px;width:171px;padding-left:5px;">CT00012025120000015</div>
<div class="mtd" style="left:261px;top:87px;width:151px;padding-left:5px;">2025-12-18 13:52:16</div>
<div class="mtd" style="left:412px;top:87px;width:181px;padding-left:5px;">20251218001</div>
<div class="mtd" style="left:593px;top:87px;width:121px;text-align:right;padding-right:5px;">1.00</div>
<div class="mtd" style="left:714px;top:87px;width:121px;text-align:right;padding-right:5px;">0.00</div>
<div class="cb" style="left:56px;top:92px;width:18px;height:18px"></div>
<div class="mtd" style="left:0px;top:116px;width:41px;text-align:center;">5</div>
<div class="mtd" style="left:41px;top:116px;width:49px;padding-left:5px;"></div>
<div class="mtd" style="left:90px;top:116px;width:171px;padding-left:5px;">CT00012025120000016</div>
<div class="mtd" style="left:261px;top:116px;width:151px;padding-left:5px;">2025-12-18 13:54:42</div>
<div class="mtd" style="left:412px;top:116px;width:181px;padding-left:5px;">20251218001</div>
<div class="mtd" style="left:593px;top:116px;width:121px;text-align:right;padding-right:5px;">2.00</div>
<div class="mtd" style="left:714px;top:116px;width:121px;text-align:right;padding-right:5px;">0.00</div>
<div class="cb" style="left:56px;top:121px;width:18px;height:18px"></div>
<div class="mtd" style="left:0px;top:145px;width:41px;text-align:center;">6</div>
<div class="mtd" style="left:41px;top:145px;width:49px;padding-left:5px;"></div>
<div class="mtd" style="left:90px;top:145px;width:171px;padding-left:5px;">DC00012025120000007</div>
<div class="mtd" style="left:261px;top:145px;width:151px;padding-left:5px;">2025-12-18 14:27:47</div>
<div class="mtd" style="left:412px;top:145px;width:181px;padding-left:5px;">202512181545290670</div>
<div class="mtd" style="left:593px;top:145px;width:121px;text-align:right;padding-right:5px;">1.00</div>
<div class="mtd" style="left:714px;top:145px;width:121px;text-align:right;padding-right:5px;">0.00</div>
<div class="cb" style="left:56px;top:150px;width:18px;height:18px"></div>
<div class="mtd" style="left:0px;top:174px;width:41px;text-align:center;">7</div>
<div class="mtd" style="left:41px;top:174px;width:49px;padding-left:5px;"></div>
<div class="mtd" style="left:90px;top:174px;width:171px;padding-left:5px;">DC00012025120000008</div>
<div class="mtd" style="left:261px;top:174px;width:151px;padding-left:5px;">2025-12-18 15:47:22</div>
<div class="mtd" style="left:412px;top:174px;width:181px;padding-left:5px;">202512181545426206</div>
<div class="mtd" style="left:593px;top:174px;width:121px;text-align:right;padding-right:5px;">2.00</div>
<div class="mtd" style="left:714px;top:174px;width:121px;text-align:right;padding-right:5px;">0.00</div>
<div class="cb" style="left:56px;top:179px;width:18px;height:18px"></div>
<div class="mtd" style="left:0px;top:203px;width:41px;text-align:center;">8</div>
<div class="mtd" style="left:41px;top:203px;width:49px;padding-left:5px;"></div>
<div class="mtd" style="left:90px;top:203px;width:171px;padding-left:5px;">DC00012025120000009</div>
<div class="mtd" style="left:261px;top:203px;width:151px;padding-left:5px;">2025-12-18 16:07:37</div>
<div class="mtd" style="left:412px;top:203px;width:181px;padding-left:5px;">202512181609488379</div>
<div class="mtd" style="left:593px;top:203px;width:121px;text-align:right;padding-right:5px;">1.00</div>
<div class="mtd" style="left:714px;top:203px;width:121px;text-align:right;padding-right:5px;">0.00</div>
<div class="cb" style="left:56px;top:208px;width:18px;height:18px"></div>
<div class="mtd" style="left:0px;top:232px;width:41px;text-align:center;">9</div>
<div class="mtd" style="left:41px;top:232px;width:49px;padding-left:5px;"></div>
<div class="mtd" style="left:90px;top:232px;width:171px;padding-left:5px;">XS00012025120000023</div>
<div class="mtd" style="left:261px;top:232px;width:151px;padding-left:5px;">2025-12-18 16:42:56</div>
<div class="mtd" style="left:412px;top:232px;width:181px;padding-left:5px;">202512181638431522</div>
<div class="mtd" style="left:593px;top:232px;width:121px;text-align:right;padding-right:5px;">1.00</div>
<div class="mtd" style="left:714px;top:232px;width:121px;text-align:right;padding-right:5px;">0.00</div>
<div class="cb" style="left:56px;top:237px;width:18px;height:18px"></div>
<div class="mtd" style="left:0px;top:261px;width:41px;text-align:center;">10</div>
<div class="mtd" style="left:41px;top:261px;width:49px;padding-left:5px;"></div>
<div class="mtd" style="left:90px;top:261px;width:171px;padding-left:5px;">XS00012025120000030</div>
<div class="mtd" style="left:261px;top:261px;width:151px;padding-left:5px;">2025-12-19 16:04:22</div>
<div class="mtd" style="left:412px;top:261px;width:181px;padding-left:5px;">202512181638431522</div>
<div class="mtd" style="left:593px;top:261px;width:121px;text-align:right;padding-right:5px;">1.00</div>
<div class="mtd" style="left:714px;top:261px;width:121px;text-align:right;padding-right:5px;">0.00</div>
<div class="cb" style="left:56px;top:266px;width:18px;height:18px"></div>
<div class="mtd" style="left:0px;top:290px;width:41px;text-align:center;">11</div>
<div class="mtd" style="left:41px;top:290px;width:49px;padding-left:5px;"></div>
<div class="mtd" style="left:90px;top:290px;width:171px;padding-left:5px;">GP00012025120000040</div>
<div class="mtd" style="left:261px;top:290px;width:151px;padding-left:5px;">2025-12-19 10:22:31</div>
<div class="mtd" style="left:412px;top:290px;width:181px;padding-left:5px;">202512181638431522</div>
<div class="mtd" style="left:593px;top:290px;width:121px;text-align:right;padding-right:5px;">2.00</div>
<div class="mtd" style="left:714px;top:290px;width:121px;text-align:right;padding-right:5px;">0.00</div>
<div class="cb" style="left:56px;top:295px;width:18px;height:18px"></div>
<div class="mtd" style="left:0px;top:319px;width:41px;text-align:center;">12</div>
<div class="mtd" style="left:41px;top:319px;width:49px;padding-left:5px;"></div>
<div class="mtd" style="left:90px;top:319px;width:171px;padding-left:5px;">WX00012025120000071</div>
<div class="mtd" style="left:261px;top:319px;width:151px;padding-left:5px;">2025-12-19 09:34:19</div>
<div class="mtd" style="left:412px;top:319px;width:181px;padding-left:5px;">202512181639315140</div>
<div class="mtd" style="left:593px;top:319px;width:121px;text-align:right;padding-right:5px;">1.00</div>
<div class="mtd" style="left:714px;top:319px;width:121px;text-align:right;padding-right:5px;">0.00</div>
<div class="cb" style="left:56px;top:324px;width:18px;height:18px"></div>
</div>
<div class="abs" style="left:1454px;top:416px;width:17px;height:339px;background:#f1f1f1"></div>
<div class="abs" style="left:1456px;top:433px;width:13px;height:199px;background:#c1c1c1"></div>
<div class="abs" style="left:1459px;top:423px;width:0;height:0;border:4px solid transparent;border-bottom:4px solid #a3a3a3;border-top:0"></div>
<div class="abs" style="left:1459px;top:745px;width:0;height:0;border:4px solid transparent;border-top:4px solid #333;border-bottom:0"></div>
<div class="abs" style="left:511px;top:754px;width:960px;height:1px;background:#d0d0d0"></div>
<div class="abs" style="left:511px;top:760px;width:960px;height:1px;background:#d6d6d6"></div>
<div class="t" style="left:594px;top:766px;font-size:23px;line-height:34px;height:34px;color:#f93ae2">无原单退回，批次选择器的数据显示不对。更新后，测试此问题</div>
<div class="abs" style="left:1352px;top:769px;width:48px;height:28px;background:#009688;border-radius:2px;color:#fff;font-size:14px;line-height:28px;text-align:center">保存</div>
<div class="abs" style="left:1414px;top:769px;width:48px;height:28px;background:#a0a0a0;border-radius:2px;color:#f0f0f0;font-size:14px;line-height:28px;text-align:center">关闭</div>
</body></html>
